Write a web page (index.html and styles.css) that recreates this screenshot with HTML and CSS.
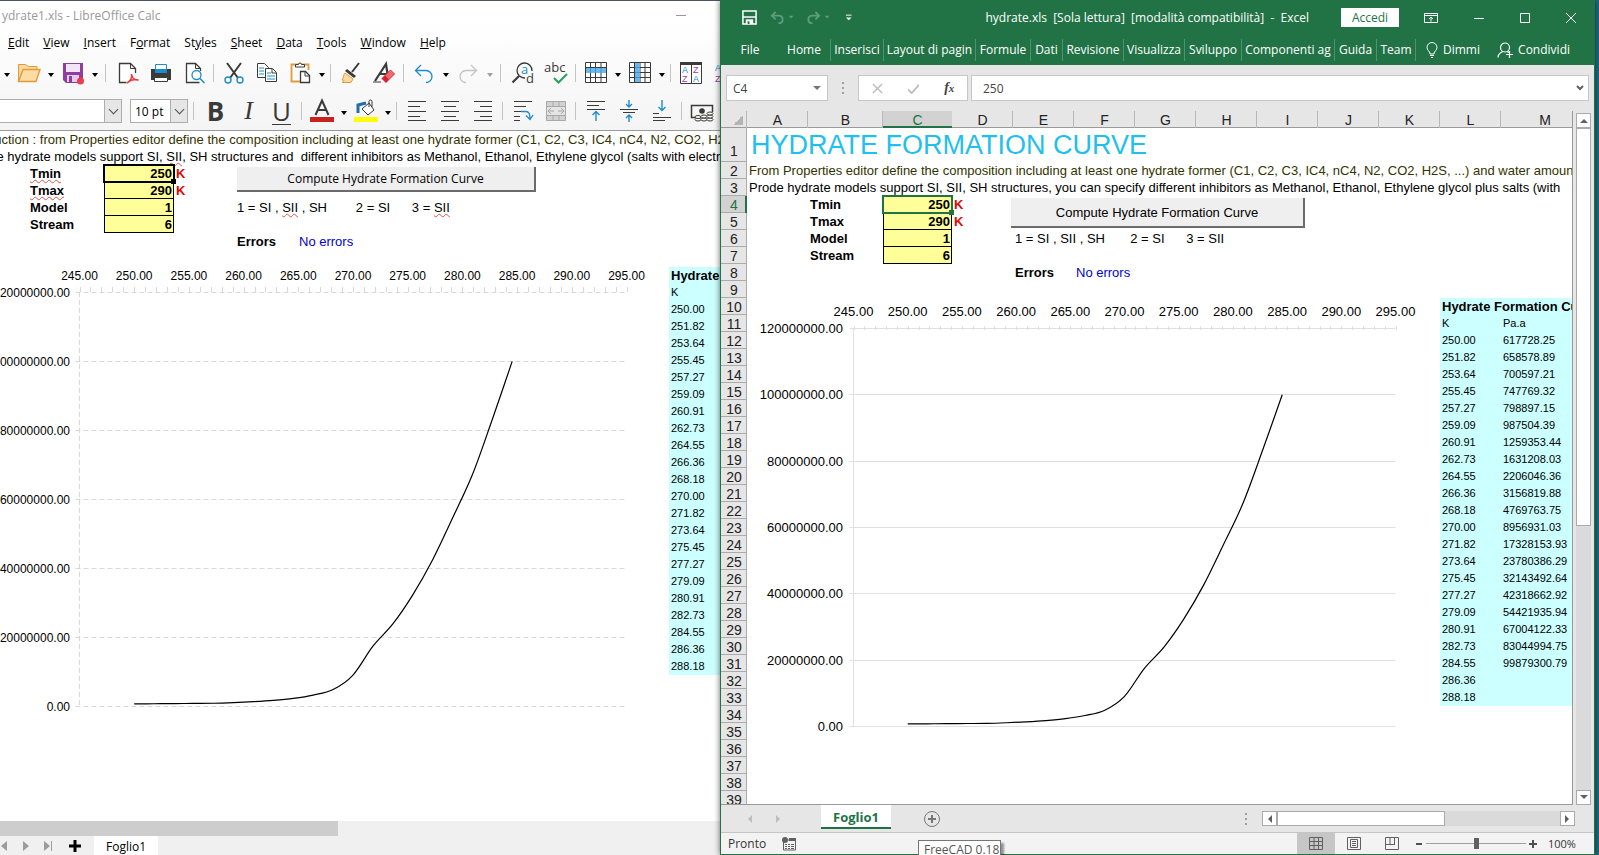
FILE: index.html
```html
<!DOCTYPE html>
<html lang="it">
<head>
    <meta charset="UTF-8">
    <title>hydrate.xls</title>
    <link rel="stylesheet" href="styles.css">
</head>
<body>
<div class="desktop">
    <!-- LibreOffice Calc -->
    <section class="calc">
        <header class="calc-title">
            <span>ydrate1.xls - LibreOffice Calc</span>
            <button class="calc-min" aria-label="Minimize"></button>
        </header>
        <nav class="calc-menu">
            <a href="#"><u>E</u>dit</a>
            <a href="#"><u>V</u>iew</a>
            <a href="#"><u>I</u>nsert</a>
            <a href="#">F<u>o</u>rmat</a>
            <a href="#">St<u>y</u>les</a>
            <a href="#"><u>S</u>heet</a>
            <a href="#"><u>D</u>ata</a>
            <a href="#"><u>T</u>ools</a>
            <a href="#"><u>W</u>indow</a>
            <a href="#"><u>H</u>elp</a>
        </nav>
        <div class="toolbar">
            <button class="more" aria-label="New options"></button>
            <button class="tool" aria-label="Open"><svg viewBox="0 0 24 24"><path d="M1.500 20V3.500h7l3 2H20V9" fill="#fbd9a0" stroke="#e39a3b"/><path d="M1.500 20.500L6 8.500h17l-4 12z" fill="#fbdca2" stroke="#e39a3b" stroke-width="1.400"/></svg></button>
            <button class="more" aria-label="Open options"></button>
            <button class="tool" aria-label="Save"><svg viewBox="0 0 24 24"><path d="M2 2h20v20H5l-3-3z" fill="#8e3f9e"/><path d="M5 3h14v8H5z" fill="#f3e4f6"/><path d="M6 14h12v7H6z" fill="#e6cbec"/><path d="M8 15h3v6H8z" fill="#8e3f9e"/><circle cx="19.500" cy="20" r="3.500" fill="#ed3d4b"/></svg></button>
            <button class="more" aria-label="Save options"></button>
            <i class="sep wide"></i>
            <button class="tool" aria-label="Export as PDF"><svg viewBox="0 0 24 24"><path d="M19.500 12V7.500l-5-5h-11v19h7" fill="#fff" stroke="#3a3a38" stroke-width="1.300"/><path d="M14.500 2.500v5h5" fill="none" stroke="#3a3a38"/><path d="M11 22c4-2 5-5 4.500-9 .5 4 3 6.500 7 6-4-1-8 0-11.500 3z" fill="#fff" stroke="#e0403f" stroke-width="1.500"/></svg></button>
            <button class="tool" aria-label="Print"><svg viewBox="0 0 24 24"><path d="M2 8h20v11H2z" fill="#3a3a38"/><path d="M6.500 3.500h11v7h-11z" fill="#fff" stroke="#1e8bcd"/><path d="M6 8h12v4H6z" fill="#1e8bcd"/><path d="M5.500 16.500h13v4h-13z" fill="#fff" stroke="#3a3a38"/></svg></button>
            <button class="tool" aria-label="Print preview"><svg viewBox="0 0 24 24"><path d="M18.500 10V7.500l-5-5h-9v19h13" fill="#fff" stroke="#3a3a38" stroke-width="1.300"/><path d="M13.500 2.500v5h5" fill="none" stroke="#3a3a38"/><circle cx="14.500" cy="14" r="4.500" fill="#fff" stroke="#1e8bcd" stroke-width="1.300"/><path d="M18 17.500l4.500 4.500" stroke="#1e8bcd" stroke-width="1.600"/></svg></button>
            <i class="sep"></i>
            <button class="tool" aria-label="Cut"><svg viewBox="0 0 24 24"><path d="M5 2l11 15M19 2L8 17" stroke="#3a3a38" stroke-width="2"/><circle cx="6" cy="19" r="3" fill="none" stroke="#1e8bcd" stroke-width="1.400"/><circle cx="18" cy="19" r="3" fill="none" stroke="#1e8bcd" stroke-width="1.400"/></svg></button>
            <button class="tool" aria-label="Copy"><svg viewBox="0 0 24 24"><path d="M2.500 2.500h7l4 4v10h-11z" fill="#fff" stroke="#3a3a38"/><path d="M4 7h5M4 10h5M4 13h5" stroke="#1e8bcd"/><path d="M10.500 7.500h7l4 4v9h-11z" fill="#fff" stroke="#3a3a38"/><path d="M17 8v4h4" fill="none" stroke="#3a3a38"/><path d="M12 12h4M12 15h8M12 18h8" stroke="#1e8bcd"/></svg></button>
            <button class="tool" aria-label="Paste"><svg viewBox="0 0 24 24"><path d="M12 20.500H3.500v-17h17V9" fill="none" stroke="#e39a3b" stroke-width="1.800"/><path d="M7.500 6V3.500h3a1.500 1.500 0 013 0h3V6z" fill="#fff" stroke="#3a3a38"/><path d="M12.500 10.500h5l4 4v7h-9z" fill="#fff" stroke="#3a3a38" stroke-width="1.300"/><path d="M17 11v4h4" fill="none" stroke="#3a3a38"/></svg></button>
            <button class="more" aria-label="Paste options"></button>
            <i class="sep"></i>
            <button class="tool" aria-label="Clone formatting"><svg viewBox="0 0 24 24"><path d="M20 2l-7 9" stroke="#3a3a38" stroke-width="2"/><path d="M8 8l9 7-2 2-9-7z" fill="#3a3a38"/><path d="M6 12l8 6-2 3.500H3c2-1 2-2 1.500-2.500H3c2-2 1-5 3-7z" fill="#fbd9a0" stroke="#e39a3b"/></svg></button>
            <button class="tool" aria-label="Clear formatting"><svg viewBox="0 0 24 24"><path d="M3 20L14 3l2 13M8 13h8" fill="none" stroke="#3a3a38" stroke-width="2.200"/><path d="M1 21h8" stroke="#3a3a38"/><path d="M10 17.500L18.500 9l4 4-8.500 8.500z" fill="#f06a72" stroke="#d93040"/><path d="M10 17.500l3-3 4 4-3 3z" fill="#d9202f"/></svg></button>
            <i class="sep"></i>
            <button class="tool" aria-label="Undo"><svg viewBox="0 0 24 24"><path d="M9 4L3.500 9.500 9 15M4 9.500h10a6 6 0 010 12" fill="none" stroke="#1e8bcd" stroke-width="1.300"/></svg></button>
            <button class="more" aria-label="Undo options"></button>
            <button class="tool" aria-label="Redo"><svg viewBox="0 0 24 24"><path d="M15 4l5.500 5.500L15 15M20 9.500H10a6 6 0 000 12" fill="none" stroke="#c4c4c4" stroke-width="1.300"/></svg></button>
            <button class="more off" aria-label="Redo options"></button>
            <i class="sep wide"></i>
            <button class="tool" aria-label="Find and replace"><svg viewBox="0 0 24 24"><path d="M14 17a7.500 7.500 0 117-7" fill="none" stroke="#3a3a38" stroke-width="1.300"/><path d="M8 15l-6.500 6.500" stroke="#3a3a38" stroke-width="2.200"/><text x="10" y="13" class="glyph" fill="#1e8bcd">a</text><text x="15" y="22" class="glyph" fill="#3a3a38">d</text></svg></button>
            <button class="tool" aria-label="Spelling"><svg viewBox="0 0 24 24"><text x="0" y="11" class="glyph" fill="#3a3a38">abc</text><path d="M10 17l4.500 4.500L23 13" fill="none" stroke="#2ba05c" stroke-width="2"/></svg></button>
            <i class="sep"></i>
            <button class="tool" aria-label="Row"><svg viewBox="0 0 24 24"><path d="M1.500 1.500h21v20h-21z" fill="#fff"/><path d="M1.500 1.500h21v20h-21zM1 6.500h22M1 11.500h22M1 16.500h22M6.500 1v20M11.500 1v20M17 1v20" fill="none" stroke="#3a3a38"/><path d="M2 7h20v5H2z" fill="#6cb8ea"/><path d="M6.500 7v5M11.500 7v5M17 7v5" stroke="#3d92c8"/></svg></button>
            <button class="more" aria-label="Row options"></button>
            <button class="tool" aria-label="Column"><svg viewBox="0 0 24 24"><path d="M1.500 1.500h21v20h-21z" fill="#fff"/><path d="M1.500 1.500h21v20h-21zM1 6.500h22M1 11.500h22M1 16.500h22M6.500 1v20M12 1v20M17 1v20" fill="none" stroke="#3a3a38"/><path d="M7 2h5v19H7z" fill="#6cb8ea"/><path d="M7 6.500h5M7 11.500h5M7 16.500h5" stroke="#3d92c8"/></svg></button>
            <button class="more" aria-label="Column options"></button>
            <i class="sep"></i>
            <button class="tool" aria-label="Sort"><svg viewBox="0 0 24 24"><path d="M1.500 1.500h21v21h-21zM12.500 3v19" fill="#fff" stroke="#3a3a38"/><path d="M1 1h22v3H1z" fill="#3a3a38"/><text x="3" y="12" class="az" fill="#1e8bcd">A</text><text x="3" y="21" class="az" fill="#9b3fa8">Z</text><text x="14" y="12" class="az" fill="#9b3fa8">Z</text><text x="14" y="21" class="az" fill="#1e8bcd">A</text></svg></button>
            <button class="tool" aria-label="Sort ascending"><svg viewBox="0 0 24 24"><text x="3" y="10" class="az" fill="#1e8bcd">A</text><text x="3" y="21" class="az" fill="#9b3fa8">Z</text></svg></button>
        </div>
        <div class="toolbar">
            <label class="combo font-name"><select aria-label="Font name"><option></option></select><span></span></label>
            <label class="combo font-size"><select aria-label="Font size"><option>10 pt</option></select><span></span></label>
            <i class="sep wide"></i>
            <button class="tool letter bold" aria-label="Bold">B</button>
            <button class="tool letter italic" aria-label="Italic">I</button>
            <button class="tool letter under" aria-label="Underline">U</button>
            <i class="sep"></i>
            <button class="tool" aria-label="Font color"><svg viewBox="0 0 24 24"><path d="M5.500 16L12 1.500 18.500 16M8 11h8" fill="none" stroke="#3a3a38" stroke-width="2"/><path d="M0 18h24v5H0z" fill="#c9211e"/></svg></button>
            <button class="more" aria-label="Font color options"></button>
            <button class="tool" aria-label="Background color"><svg viewBox="0 0 24 24"><path d="M4 14V6l8-2" fill="none" stroke="#1e6fb0" stroke-width="3"/><path d="M8 10l7-6 5 7-6 5z" fill="#fff" stroke="#3a3a38"/><path d="M15 8V2.500a1.500 1.500 0 013 0V8" fill="none" stroke="#3a3a38"/><path d="M0 18h24v5H0z" fill="#ffff00"/></svg></button>
            <button class="more" aria-label="Background color options"></button>
            <i class="sep"></i>
            <button class="tool" aria-label="Align left"><svg viewBox="0 0 24 24"><path d="M3 2.500h18M3 7.500h12M3 12.500h18M3 17.500h12M3 21.500h18" stroke="#3a3a38"/></svg></button>
            <button class="tool" aria-label="Align center"><svg viewBox="0 0 24 24"><path d="M3 2.500h18M6 7.500h12M3 12.500h18M6 17.500h12M3 21.500h18" stroke="#3a3a38"/></svg></button>
            <button class="tool" aria-label="Align right"><svg viewBox="0 0 24 24"><path d="M3 2.500h18M9 7.500h12M3 12.500h18M9 17.500h12M3 21.500h18" stroke="#3a3a38"/></svg></button>
            <i class="sep"></i>
            <button class="tool" aria-label="Wrap text"><svg viewBox="0 0 24 24"><path d="M3 2.500h18M3 7.500h12M3 12.500h9M3 17.500h6M3 21.500h6" stroke="#3a3a38"/><path d="M10 12.500h5c3 0 4 2 4 7M15 16.500l4 4 3-4.500" fill="none" stroke="#1e8bcd" stroke-width="1.300"/></svg></button>
            <button class="tool" aria-label="Merge cells"><svg viewBox="0 0 24 24"><path d="M2.500 2.500h19v19h-19z" fill="#d2d2d2" stroke="#a8a8a8"/><path d="M2 7.500h20M2 16.500h20M9 2v5M15 2v5M9 17v5M15 17v5" stroke="#a8a8a8"/><path d="M3 8h18v8H3z" fill="#e4e4e4"/><path d="M4 12h6M7 9l-3 3 3 3M20 12h-6M17 9l3 3-3 3" fill="none" stroke="#a8a8a8"/></svg></button>
            <i class="sep"></i>
            <button class="tool" aria-label="Align top"><svg viewBox="0 0 24 24"><path d="M3 2.500h18M3 6.500h12M3 10.500h18" stroke="#3a3a38"/><path d="M12 22v-9M8.500 16l3.500-3.500 3.500 3.500" fill="none" stroke="#1e8bcd" stroke-width="1.400"/></svg></button>
            <button class="tool" aria-label="Center vertically"><svg viewBox="0 0 24 24"><path d="M3 10.500h18M6 13.500h12" stroke="#3a3a38"/><path d="M12 1v7M9 5l3 3 3-3M12 23v-7M9 19l3-3 3 3" fill="none" stroke="#1e8bcd" stroke-width="1.400"/></svg></button>
            <button class="tool" aria-label="Align bottom"><svg viewBox="0 0 24 24"><path d="M3 14.500h6M3 18.500h18M3 21.500h12" stroke="#3a3a38"/><path d="M12 1v10M8.500 8l3.500 3.500L15.500 8" fill="none" stroke="#1e8bcd" stroke-width="1.400"/></svg></button>
            <i class="sep"></i>
            <button class="tool" aria-label="Currency"><svg viewBox="0 0 24 24"><path d="M5 18.500H1.500v-12h21V13" fill="none" stroke="#3a3a38" stroke-width="1.500"/><circle cx="12" cy="12" r="2.800" fill="#3a3a38"/><g fill="#fff" stroke="#3a3a38"><ellipse cx="8" cy="20.500" rx="3" ry="1.500"/><ellipse cx="8" cy="18" rx="3" ry="1.500"/><ellipse cx="14" cy="20.500" rx="3" ry="1.500"/><ellipse cx="14" cy="17.500" rx="3" ry="1.500"/><ellipse cx="20" cy="20.500" rx="3" ry="1.500"/><ellipse cx="20" cy="17.500" rx="3" ry="1.500"/><ellipse cx="20" cy="14.500" rx="3" ry="1.500"/></g></svg></button>
        </div>
        <div class="calc-sheet sheet">
            <table id="calc-table"></table>
            <button class="compute">Compute Hydrate Formation Curve</button>
            <svg class="chart" id="calc-chart"></svg>
        </div>
        <div class="calc-scroll"><div></div></div>
        <footer class="calc-tabs">
            <svg viewBox="0 0 56 20" width="56" height="20"><path d="M7 5v10L1 10zM23 5v10l6-5zM44 5v10l6-5z" fill="#9c9c9c"/><path d="M51.500 5v10" stroke="#9c9c9c"/></svg>
            <button class="add-sheet" aria-label="Add sheet"><svg viewBox="0 0 14 14" width="14" height="14"><path d="M7 1v12M1 7h12" stroke="#000" stroke-width="3"/></svg></button>
            <a class="tab" href="#">Foglio1</a>
        </footer>
    </section>

    <!-- Excel -->
    <section class="excel">
        <header class="excel-title">
            <div class="quick">
                <button aria-label="Salva"><svg viewBox="0 0 16 16"><path d="M1 1h14v14H1z" fill="none" stroke="#fff" stroke-width="1.600"/><path d="M1 7.500h14" stroke="#fff" stroke-width="1.600"/><path d="M4 10h8v5H4z" fill="#fff"/><path d="M6 12h2v3H6z" fill="#217346"/></svg></button>
                <button aria-label="Annulla"><svg viewBox="0 0 24 16"><path d="M6 2L2 6l4 4M2 6h7c6 0 6 8 0 8" fill="none" stroke="#5f9c7a" stroke-width="2"/><path d="M20 6h5l-2.500 3z" fill="#5f9c7a"/></svg></button>
                <button aria-label="Ripeti"><svg viewBox="0 0 24 16"><path d="M10 2l4 4-4 4M14 6H7c-6 0-6 8 0 8" fill="none" stroke="#5f9c7a" stroke-width="2"/><path d="M20 6h5l-2.500 3z" fill="#5f9c7a"/></svg></button>
                <button class="customize" aria-label="Personalizza"><svg viewBox="0 0 8 16"><path d="M1 5.500h6" stroke="#fff"/><path d="M1 8h6l-3 3z" fill="#fff"/></svg></button>
            </div>
            <span class="caption">hydrate.xls&nbsp; [Sola lettura]&nbsp; [modalità compatibilità] &nbsp;-&nbsp; Excel</span>
            <button class="accedi">Accedi</button>
            <div class="win">
                <button aria-label="Opzioni barra multifunzione"><svg viewBox="0 0 14 12"><path d="M.5 1.500h13v9H.5zM0 3.500h14" fill="none" stroke="#fff"/><path d="M7 9.500V5.500M5 7l2-2 2 2" fill="none" stroke="#fff"/></svg></button>
                <button aria-label="Riduci a icona"><svg viewBox="0 0 10 12"><path d="M0 6.500h10" stroke="#fff"/></svg></button>
                <button aria-label="Ingrandisci"><svg viewBox="0 0 10 12"><path d="M.5 1.500h9v9h-9z" fill="none" stroke="#fff"/></svg></button>
                <button aria-label="Chiudi"><svg viewBox="0 0 10 12"><path d="M0 1l10 10M10 1L0 11" stroke="#fff"/></svg></button>
            </div>
        </header>
        <nav class="ribbon">
            <a href="#">File</a>
            <a href="#">Home</a>
            <a href="#">Inserisci</a>
            <a href="#">Layout di pagin</a>
            <a href="#">Formule</a>
            <a href="#">Dati</a>
            <a href="#">Revisione</a>
            <a href="#">Visualizza</a>
            <a href="#">Sviluppo</a>
            <a href="#">Componenti ag</a>
            <a href="#">Guida</a>
            <a href="#">Team</a>
            <a class="tell" href="#"><svg viewBox="0 0 12 16"><path d="M4 12C4 9 1 8.500 1 5.500a5 5 0 0110 0C11 8.500 8 9 8 12zM4 13.500h4M5 15.500h2" fill="none" stroke="#fff"/></svg>Dimmi</a>
            <a class="share" href="#"><svg viewBox="0 0 16 16"><circle cx="8" cy="5.500" r="4.500" fill="none" stroke="#fff" stroke-width="1.200"/><path d="M1 15.500c0-4 3-5 5-6M10 9.500l2 1M9 12.500h7M12.500 9v7" fill="none" stroke="#fff" stroke-width="1.200"/></svg>Condividi</a>
        </nav>
        <div class="formula">
            <div class="name-box"><input type="text" value="C4" aria-label="Casella nome"><span></span></div>
            <i class="dots"></i>
            <div class="fx">
                <button aria-label="Annulla"><svg viewBox="0 0 12 12"><path d="M1 1l10 10M11 1L1 11" stroke="#bdbdbd" stroke-width="1.600"/></svg></button>
                <button aria-label="Invio"><svg viewBox="0 0 12 12"><path d="M0 7l4 4 8-9" fill="none" stroke="#bdbdbd" stroke-width="2"/></svg></button>
                <button class="fn" aria-label="Inserisci funzione">f<small>x</small></button>
            </div>
            <div class="entry"><input type="text" value="250" aria-label="Barra della formula"><svg viewBox="0 0 8 6" width="8" height="6"><path d="M1 1l3 3 3-3" fill="none" stroke="#606060" stroke-width="2"/></svg></div>
        </div>
        <div class="excel-main">
            <div class="excel-sheet sheet">
                <table id="excel-table"></table>
                <button class="compute">Compute Hydrate Formation Curve</button>
                <svg class="chart" id="excel-chart"></svg>
            </div>
            <div class="vscroll">
                <button aria-label="Su"><svg viewBox="0 0 8 5" width="8" height="5"><path d="M0 5l4-4 4 4z" fill="#606060"/></svg></button>
                <div class="thumb"></div>
                <div class="track"></div>
                <button aria-label="Giù"><svg viewBox="0 0 8 5" width="8" height="5"><path d="M0 0l4 4 4-4z" fill="#606060"/></svg></button>
            </div>
        </div>
        <div class="excel-tabs">
            <svg viewBox="0 0 34 10" width="34" height="10"><path d="M5 1v8L1 5zM29 1v8l4-4z" fill="#bdbdbd"/></svg>
            <a class="tab" href="#">Foglio1</a>
            <button class="plus" aria-label="Nuovo foglio"><svg viewBox="0 0 16 16" width="16" height="16"><circle cx="8" cy="8" r="7.500" fill="none" stroke="#767676"/><path d="M8 4v8M4 8h8" stroke="#767676" stroke-width="2"/></svg></button>
            <i class="dots"></i>
            <div class="hscroll">
                <button aria-label="Sinistra"><svg viewBox="0 0 5 8" width="5" height="8"><path d="M5 0L1 4l4 4z" fill="#606060"/></svg></button>
                <div class="thumb"></div>
                <button aria-label="Destra"><svg viewBox="0 0 5 8" width="5" height="8"><path d="M0 0l4 4-4 4z" fill="#606060"/></svg></button>
            </div>
        </div>
        <footer class="status">
            <span>Pronto</span>
            <svg viewBox="0 0 14 14" width="14" height="14"><path d="M1.500 5v8h12V3H6" fill="none" stroke="#606060"/><path d="M7 1h7v3H7zM3 7h2v1H3zM6 7h2v1H6zM9 7h3v1H9zM3 9h2v1H3zM6 9h2v1H6zM9 9h3v1H9zM3 11h2v1H3zM6 11h2v1H6zM9 11h3v1H9z" fill="#606060"/><circle cx="3" cy="3" r="3" fill="#606060"/></svg>
            <div class="views">
                <button class="on" aria-label="Normale"><svg viewBox="0 0 14 14"><path d="M.5.5h13v12H.5zM0 4.500h14M0 8.500h14M5 0v13M9.500 0v13" fill="none" stroke="#606060"/></svg></button>
                <button aria-label="Layout di pagina"><svg viewBox="0 0 14 14"><path d="M.5.5h13v12H.5zM3.500 2.500h7v8h-7zM5 4.500h4M5 6.500h4M5 8.500h4" fill="none" stroke="#606060"/></svg></button>
                <button aria-label="Anteprima interruzioni"><svg viewBox="0 0 14 14"><path d="M.5.5h13v12H.5zM5 0v7M9.500 0v7M1 7.500h9" fill="none" stroke="#606060"/></svg></button>
            </div>
            <div class="zoom">
                <button aria-label="Zoom indietro"><svg viewBox="0 0 8 8"><path d="M1 4h6" stroke="#505050" stroke-width="2"/></svg></button>
                <input type="range" min="0" max="100" value="50" aria-label="Zoom">
                <button aria-label="Zoom avanti"><svg viewBox="0 0 8 8"><path d="M0 4h8M4 0v8" stroke="#505050" stroke-width="2"/></svg></button>
                <span>100%</span>
            </div>
        </footer>
        <div class="tip">FreeCAD 0.18</div>
    </section>
</div>
<script src="script.js"></script>
</body>
</html>
```
FILE: styles.css
```css
*{box-sizing:border-box}
body{
    margin:0;
    font-family:"Open Sans","Noto Sans",sans-serif;
    font-size:12px;
    color:#000;
}
button{
    border:0;
    padding:0;
    background:none;
    font:inherit;
    color:inherit;
}
a{color:inherit;text-decoration:none}
select,input{font:inherit;color:inherit}
.desktop{
    display:grid;
    grid-template-columns:minmax(0,720fr) minmax(0,875fr) 4px;
    height:100vh;
    overflow:hidden;
    background:linear-gradient(90deg,#164a58,#216b82);
}

/* Calc */
.calc{
    display:flex;
    flex-direction:column;
    min-width:0;
    height:100vh;
    overflow:hidden;
    border-top:1px solid #4b5560;
    background:linear-gradient(#fff 20px,#f4f4f4 130px);
}
.calc-title{
    display:flex;
    justify-content:space-between;
    align-items:center;
    height:29px;
    padding:0 34px 0 2px;
    color:#999;
}
.calc-min{
    width:10px;
    height:1px;
    background:#999;
}
.calc-menu{
    display:flex;
    gap:14px;
    align-items:center;
    height:24px;
    padding-left:8px;
}
.toolbar{
    display:flex;
    align-items:center;
    height:38px;
    padding-left:1px;
    overflow:hidden;
}
.toolbar + .toolbar{padding-left:0}
.tool{
    flex:none;
    width:33px;
    height:28px;
    display:flex;
    align-items:center;
    justify-content:center;
}
.tool svg{width:24px;height:24px;overflow:visible}
.more{
    flex:none;
    width:11px;
    height:28px;
}
.more:after{
    content:'';
    display:block;
    margin:3px auto 0;
    width:0;
    border:3px solid transparent;
    border-top:4px solid #000;
    border-bottom:0;
}
.more.off:after{border-top-color:#a0a0a0}
.sep{
    flex:none;
    width:7px;
    height:18px;
    background:linear-gradient(#c4c4c4,#c4c4c4) center/1px 100% no-repeat;
}
.sep.wide{width:11px}
.glyph{font-size:13px}
.az{font:9px "Liberation Sans",sans-serif}
.letter{font-size:26px;line-height:28px;color:#3a3a38}
.bold{font-weight:bold}
.italic{font-family:"Liberation Serif",serif;font-style:italic}
.under{text-decoration:underline;text-decoration-thickness:1px;text-underline-offset:3px}
.combo{
    position:relative;
    flex:none;
    display:block;
    height:24px;
}
.combo select{
    width:100%;
    height:24px;
    padding:0 4px;
    appearance:none;
    border:1px solid #adadad;
    border-radius:0;
    background:#fff;
}
.combo span{
    position:absolute;
    right:0;
    top:0;
    width:18px;
    height:24px;
    border:1px solid #adadad;
    background:#e6e6e6;
    pointer-events:none;
}
.combo span:after{
    content:'';
    display:block;
    width:6px;
    height:6px;
    margin:6px auto 0;
    border:solid #505050;
    border-width:0 1px 1px 0;
    transform:rotate(45deg);
}
.font-name{width:122px;margin-right:8px}
.font-name select{border-left:0}
.font-size{width:58px}
.calc-scroll{height:15px;background:#f0f0f0}
.calc-scroll div{width:47%;height:100%;background:#cdcdcd}
.calc-tabs{
    display:flex;
    align-items:center;
    height:19px;
    background:#f0f0f0;
}
.add-sheet{width:38px;display:flex;justify-content:center}
.calc-tabs .tab{
    align-self:stretch;
    padding:0 12px;
    line-height:22px;
    background:#fff;
}

/* sheets */
.sheet{
    position:relative;
    overflow:hidden;
    background:#fff;
    font-family:"Liberation Sans",Arial,sans-serif;
    font-size:13px;
}
.sheet table{
    table-layout:fixed;
    border-spacing:0;
    width:0;
}
.sheet td,.sheet th{
    height:17px;
    padding:0 2px;
    line-height:17px;
    white-space:pre;
    font-weight:normal;
    text-align:left;
}
.sheet .b{font-weight:bold}
.sheet .note{color:#333300}
.sheet .unit{font-weight:bold;color:#dd0806}
.sheet .msg{color:#0000d4}
.sheet .data{font-size:11px;background:#ccffff}
.sheet .data-title{font-weight:bold;background:#ccffff}
.sheet .val{
    font-weight:bold;
    text-align:right;
    background:#ffff99;
    box-shadow:inset -1px -1px #000,inset 1px 0 #000;
}
.sheet .val.active{position:relative;outline:2px solid #217346;outline-offset:-1px}
.sheet .val.active:after{
    content:'';
    position:absolute;
    right:-2px;
    bottom:-2px;
    width:5px;
    height:5px;
    background:#217346;
}
.calc-sheet .val.active{outline-color:#000}
.calc-sheet .val.active:after{background:#000}
.sheet s{
    text-decoration:underline wavy #e05050 1px;
    text-underline-offset:1px;
    text-decoration-skip-ink:none;
}
.compute{
    position:absolute;
    background:#efefef;
    border:solid #6b6b6b;
    border-width:0 2px 2px 0;
}
.chart{position:absolute;overflow:visible}
.chart text{fill:#000}
.curve{fill:none;stroke:#000;stroke-width:1.200}
.grid{stroke:#d8d8d8;fill:none}
.calc-sheet{
    flex:1;
    min-height:0;
    border-top:1px solid #9a9a9a;
}
.calc-sheet table{margin-left:-33px}
.calc-sheet .compute{
    left:237px;
    top:36px;
    width:299px;
    height:25px;
    font-family:"Open Sans","Noto Sans",sans-serif;
    font-size:12px;
}
.calc-sheet .chart{
    left:0;
    top:132px;
    width:660px;
    height:460px;
    font-size:12px;
}
.calc-sheet .grid{stroke-dasharray:5 3}

/* Excel */
.excel{
    position:relative;
    display:flex;
    flex-direction:column;
    min-width:0;
    height:100vh;
    border:1px solid #217346;
    border-top:0;
    background:#e6e6e6;
    box-shadow:0 0 6px rgba(0,0,0,.6);
}
.excel-title{
    display:flex;
    align-items:center;
    height:35px;
    padding:0 18px 0 21px;
    color:#fff;
    background:#217346;
}
.quick{display:flex;align-items:center;gap:13px;flex:1}
.quick button,.win button{display:flex}
.quick svg{height:15px;overflow:visible}
.quick .customize{margin-left:4px}
.caption{white-space:nowrap}
.accedi{
    width:58px;
    height:19px;
    margin:0 25px 0 32px;
    background:#fff;
    color:#217346;
}
.win{display:flex;gap:36px;align-items:center}
.win svg{height:12px}
.ribbon{
    display:grid;
    grid-template-columns:44px 59px 53px 92px 55px 32px 61px 61px 57px 93px 42px 39px 1fr auto;
    align-items:center;
    height:30px;
    padding:0 24px 0 7px;
    color:#fff;
    background:#217346;
}
.ribbon a{
    height:22px;
    line-height:22px;
    text-align:center;
    white-space:nowrap;
    border-right:1px solid #4f9270;
}
.ribbon a:first-child,.ribbon .tell,.ribbon .share{border-right:0}
.ribbon a:nth-child(2){padding-left:6px}
.ribbon .tell,.ribbon .share{
    display:flex;
    align-items:center;
    gap:5px;
}
.ribbon .tell{padding-left:10px}
.ribbon svg{height:16px}
.formula{
    display:flex;
    align-items:center;
    height:46px;
    padding:0 5px 0 5px;
    color:#444;
}
.name-box,.fx,.entry{
    display:flex;
    align-items:center;
    height:26px;
    border:1px solid #c6c6c6;
    background:#fff;
}
.formula input{
    width:0;
    flex:1;
    border:0;
    outline:0;
    padding:0 6px;
    background:none;
}
.name-box{width:102px;padding-right:6px}
.name-box span{border:4px solid transparent;border-top-color:#767676;border-bottom:0}
.dots{
    flex:none;
    width:2px;
    height:12px;
    background:repeating-linear-gradient(#a0a0a0 0 2px,transparent 2px 5px);
}
.formula .dots{margin:0 14px}
.fx{width:110px;justify-content:space-around;margin-right:3px}
.fx svg{width:11px;height:11px;display:block}
.fn{font:italic bold 14px "Liberation Serif",serif}
.fn small{font-size:11px}
.entry{flex:1;padding-right:4px}
.entry input{padding-left:11px}
.excel-main{
    flex:1;
    display:flex;
    gap:3px;
    min-height:0;
    padding-right:3px;
}
.excel-sheet{
    flex:1;
    border-right:1px solid #9a9a9a;
    border-bottom:1px solid #9a9a9a;
}
.excel-sheet th{
    padding:0;
    text-align:center;
    background:#e6e6e6;
    font-size:14px;
    line-height:16px;
    color:#222;
    box-shadow:inset -1px -1px #ababab;
}
.excel-sheet thead th{box-shadow:inset -1px 0 #b8b8b8,inset 0 -1px #9a9a9a}
.excel-sheet th.on{
    background:#d2d2d2;
    color:#217346;
    box-shadow:inset 0 -2px #217346;
}
.excel-sheet tbody th.on{box-shadow:inset -2px 0 #217346,inset 0 -1px #ababab}
.excel-sheet thead th:first-child{
    background:linear-gradient(135deg,transparent 50%,#b4b4b4 50%) 12px 4px/10px 10px no-repeat #e6e6e6;
}
.excel-sheet .first td,.excel-sheet .first th{height:34px}
.excel-sheet .first th{vertical-align:bottom;line-height:22px}
.excel-sheet td.heading{
    font-size:27px;
    line-height:34px;
    padding-left:4px;
    color:#1fbfee;
}
.excel-sheet .compute{
    left:290px;
    top:87px;
    width:294px;
    height:30px;
    font-family:"Liberation Sans",Arial,sans-serif;
    font-size:13px;
}
.excel-sheet .chart{
    left:26px;
    top:187px;
    width:680px;
    height:450px;
    font-size:13px;
}
.excel-sheet .grid{stroke:#e0e0e0}
.vscroll{
    display:flex;
    flex-direction:column;
    width:15px;
    margin-top:2px;
    background:#dadada;
}
.vscroll button,.hscroll button{
    flex:none;
    display:flex;
    align-items:center;
    justify-content:center;
    width:15px;
    height:15px;
    border:1px solid #ababab;
    background:#fff;
}
.thumb{border:1px solid #ababab;background:#fff}
.vscroll .thumb{flex:3}
.vscroll .track{flex:2}
.excel-tabs{
    display:flex;
    align-items:center;
    height:27px;
    padding:0 19px 0 26px;
}
.excel-tabs .tab{
    align-self:flex-start;
    height:24px;
    width:70px;
    margin:0 33px 0 40px;
    line-height:24px;
    text-align:center;
    font-weight:bold;
    font-size:13px;
    color:#217346;
    background:#fff;
    border-bottom:2px solid #217346;
}
.plus{display:flex}
.excel-tabs .dots{margin:0 15px 0 auto}
.hscroll{
    display:flex;
    width:313px;
    height:15px;
    background:#dadada;
}
.hscroll .thumb{width:168px}
.hscroll button:last-child{margin-left:auto}
.status{
    display:flex;
    align-items:center;
    height:22px;
    padding:0 18px 0 7px;
    border-top:1px solid #c6c6c6;
    background:#f3f3f3;
    color:#333;
}
.status>svg{margin-left:16px}
.views{display:flex;align-self:stretch;margin:0 4px 0 auto}
.views button{width:38px;display:flex;align-items:center;justify-content:center}
.views .on{background:#c6c6c6}
.views svg{width:14px;height:14px}
.zoom{display:flex;align-items:center;gap:3px}
.zoom button{display:flex}
.zoom svg{width:8px;height:8px}
.zoom span{margin-left:8px;width:28px;font-size:11px}
.zoom input{
    appearance:none;
    width:100px;
    height:11px;
    margin:0;
    background:linear-gradient(#a0a0a0,#a0a0a0) center/100% 1px no-repeat;
}
.zoom input::-webkit-slider-thumb{
    appearance:none;
    width:5px;
    height:11px;
    background:#606060;
}
.tip{
    position:absolute;
    left:197px;
    bottom:-4px;
    width:83px;
    height:18px;
    padding-left:5px;
    line-height:18px;
    color:#555;
    background:#fff;
    border:1px solid #767676;
    box-shadow:3px 3px 2px rgba(0,0,0,.4);
}
```
FILE: script.js
```js
const temps = ["250.00", "251.82", "253.64", "255.45", "257.27", "259.09", "260.91", "262.73", "264.55", "266.36", "268.18",
    "270.00", "271.82", "273.64", "275.45", "277.27", "279.09", "280.91", "282.73", "284.55", "286.36", "288.18"];
const pressures = ["617728.25", "658578.89", "700597.21", "747769.32", "798897.15", "987504.39", "1259353.44", "1631208.03",
    "2206046.36", "3156819.88", "4769763.75", "8956931.03", "17328153.93", "23780386.29", "32143492.64", "42318662.92",
    "54421935.94", "67004122.33", "83044994.75", "99879300.79"];
const letters = "ABCDEFGHIJKLM".split("");

/* cells shared by both workbooks: top = row of the Tmin input, table = first row of the results */
function commonCells(top, table) {
    let cells = {};
    [["Tmin", 250], ["Tmax", 290], ["Model", 1], ["Stream", 6]].forEach(([name, value], i) => {
        cells["B" + (top + i)] = [name, "b"];
        cells["C" + (top + i)] = [value, i ? "val" : "val active"];
        if (i < 2) cells["D" + (top + i)] = ["K", "unit"];
    });
    cells["E" + (top + 4)] = ["Errors", "b"];
    cells["F" + (top + 4)] = ["No errors", "msg"];
    cells["L" + table] = ["Hydrate Formation Curve", "data-title"];
    cells["M" + table] = ["", "data-title"];
    cells["L" + (table + 1)] = ["K", "data"];
    cells["M" + (table + 1)] = ["Pa.a", "data"];
    temps.forEach((t, i) => {
        cells["L" + (table + 2 + i)] = [t, "data"];
        cells["M" + (table + 2 + i)] = [pressures[i] || "", "data"];
    });
    return cells;
}

function buildSheet(id, widths, rows, cells, headers) {
    let html = "<colgroup>" + (headers ? '<col style="width:26px">' : "");
    html += widths.map(w => `<col style="width:${w}px">`).join("") + "</colgroup>";
    let cols = letters.slice(0, widths.length);
    if (headers) {
        html += "<thead><tr><th></th>" + cols.map(l => `<th class="${l === "C" ? "on" : ""}">${l}</th>`).join("") + "</tr></thead>";
    }
    html += "<tbody>";
    for (let r = rows[0]; r <= rows[1]; r++) {
        html += `<tr class="${r === 1 ? "first" : ""}">`;
        if (headers) html += `<th class="${r === 4 ? "on" : ""}">${r}</th>`;
        cols.forEach(l => {
            let cell = cells[l + r] || ["", ""];
            html += `<td class="${cell[1]}">${cell[0]}</td>`;
        });
        html += "</tr>";
    }
    document.getElementById(id).innerHTML = html + "</tbody>";
}

/* x0,y0 = plot corner, w,h = plot size, right = right edge of the value labels */
function drawChart(id, o) {
    const px = t => o.x0 + (t - 245) / 50 * o.w;
    const py = p => o.y0 + o.h - p / 120000000 * o.h;
    let out = "";
    for (let v = 0; v <= 120000000; v += 20000000) {
        let y = Math.round(py(v)) + 0.5;
        out += `<path class="grid" d="M${o.x0 - 4} ${y}H${o.x0 + o.w}"/>`;
        out += `<text x="${o.right}" y="${y + 4}" text-anchor="end">${v}.00</text>`;
    }
    out += `<path class="grid" d="M${o.x0} ${o.y0}V${o.y0 + o.h}"/>`;
    for (let t = 245; t <= 295; t++) {
        let x = Math.round(px(t)) + 0.5;
        out += `<path class="grid" d="M${x} ${o.y0 - o.tick}V${o.y0 + 2}"/>`;
        if (t % 5 === 0) out += `<text x="${px(t)}" y="${o.y0 - 12}" text-anchor="middle">${t}.00</text>`;
    }
    let pts = pressures.map((p, i) => [px(+temps[i]), py(+p)]);
    let d = `M${pts[0]}`;
    for (let i = 0; i < pts.length - 1; i++) {
        let a = pts[i - 1] || pts[i], b = pts[i], c = pts[i + 1], e = pts[i + 2] || c;
        d += `C${b[0] + (c[0] - a[0]) / 6} ${b[1] + (c[1] - a[1]) / 6} ${c[0] - (e[0] - b[0]) / 6} ${c[1] - (e[1] - b[1]) / 6} ${c}`;
    }
    document.getElementById(id).innerHTML = out + `<path class="curve" d="${d}"/>`;
}

let calc = commonCells(4, 10);
calc.A2 = ["Instruction : from Properties editor define the composition including at least one hydrate former (C1, C2, C3, IC4, nC4, N2, CO2, H2S", "note"];
calc.A3 = ["Prode hydrate models support SI, <s>SII</s>, SH structures and  different inhibitors as Methanol, Ethanol, Ethylene glycol (salts with electrolyte)", ""];
calc.B4[0] = "<s>Tmin</s>";
calc.B5[0] = "<s>Tmax</s>";
calc.E6 = ["1 = SI , <s>SII</s> , SH        2 = SI      3 = <s>SII</s>", ""];
calc.L10[0] = "Hydrate";
buildSheet("calc-table", [61, 76, 70, 61, 62, 62, 62, 62, 62, 62, 62, 62], [2, 42], calc, false);

let excel = commonCells(4, 10);
excel.A1 = ["HYDRATE FORMATION CURVE", "heading"];
excel.A2 = ["From Properties editor define the composition including at least one hydrate former (C1, C2, C3, IC4, nC4, N2, CO2, H2S, ...) and water amount", "note"];
excel.A3 = ["Prode hydrate models support SI, SII, SH structures, you can specify different inhibitors as Methanol, Ethanol, Ethylene glycol plus salts (with", ""];
excel.E6 = ["1 = SI , SII , SH       2 = SI      3 = SII", ""];
buildSheet("excel-table", [61, 75, 69, 61, 61, 61, 61, 61, 61, 61, 61, 61, 88], [1, 39], excel, true);

drawChart("calc-chart", {x0: 79.5, y0: 29, w: 547, h: 414, right: 70, tick: 5});
drawChart("excel-chart", {x0: 106.5, y0: 30, w: 542, h: 398, right: 96, tick: 2});
```
